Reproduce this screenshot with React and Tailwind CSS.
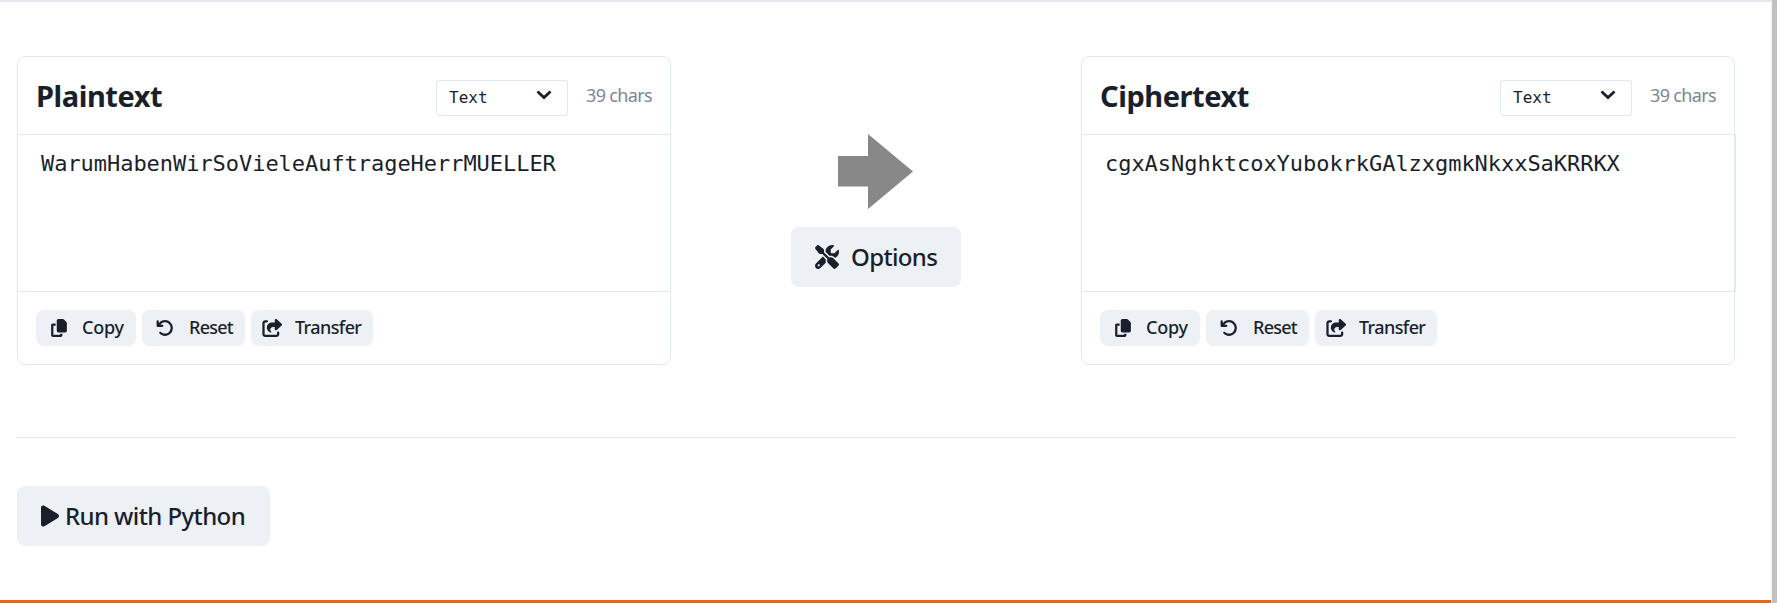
import { FaCopy, FaArrowRotateLeft, FaShareFromSquare, FaScrewdriverWrench, FaPlay } from "react-icons/fa6";

function Panel({ title, text, overflow }) {
  return (
    <section className="flex h-[309px] w-[654px] flex-col rounded-lg border border-[#e2e8f0]">
      <header className="flex h-[77px] shrink-0 items-center px-[18px]">
        <h2 className="text-[29px] leading-10 font-bold tracking-[-0.45px] whitespace-nowrap">{title}</h2>
        <div className="mt-1 ml-auto flex h-9 w-[132px] items-center justify-between rounded-[3px] border border-[#e2e8f0] pr-[15px] pl-3 font-['DejaVu_Sans_Mono',monospace] text-[16px]">
          <span>Text</span>
          <svg viewBox="0 0 16 10" className="mb-[6px] h-[10px] w-4" fill="none" stroke="currentColor" strokeWidth="2.8">
            <path d="M1.5 1.5 8 7.6l6.5-6.1" />
          </svg>
        </div>
        <span className="ml-[18px] w-[66px] text-[18px] tracking-[-0.65px] whitespace-nowrap text-[#7c869a]">39 chars</span>
      </header>
      <div className={"h-[158px] shrink-0 border-y border-[#e2e8f0] pt-[12px] pl-[23px] font-['DejaVu_Sans_Mono',monospace] text-[22px] leading-[34px] tracking-[-0.045px] " + (overflow ? "w-[654px] border-r-2" : "")}>{text}</div>
      <footer className="flex gap-[6px] pt-[18px] pl-[18px] text-[18px] leading-[34px] font-medium">
        <button className="flex h-9 w-[100px] items-center rounded-lg bg-[#edf1f6] pl-[14px]">
          <FaCopy size={18} /><span className="mb-[2px] ml-[14px] tracking-[-0.25px]">Copy</span>
        </button>
        <button className="flex h-9 w-[103px] items-center rounded-lg bg-[#edf1f6] pl-[14px]">
          <FaArrowRotateLeft size={18} /><span className="mb-[2px] ml-[15px] tracking-[-0.75px]">Reset</span>
        </button>
        <button className="flex h-9 w-[122px] items-center rounded-lg bg-[#edf1f6] pl-[11px]">
          <FaShareFromSquare className="h-[18px] w-[21px]" preserveAspectRatio="xMidYMid meet" /><span className="mb-[2px] ml-3 tracking-[-0.6px]">Transfer</span>
        </button>
      </footer>
    </section>
  );
}

export default function App() {
  return (
    <div className="flex h-[603px] w-[1777px] overflow-hidden bg-white font-['Noto_Sans',sans-serif] text-[#1a1f2c]">
      <main className="flex w-[1771px] flex-col border-t-2 border-b-[3px] border-t-[#e2e8f0] border-b-[#ee6311] pt-[54px] pl-[17px]">
        <div className="flex">
          <Panel title="Plaintext" text="WarumHabenWirSoVieleAuftrageHerrMUELLER" />
          <div className="flex w-[410px] flex-col pt-[78px]">
            <svg viewBox="0 0 75 75" className="ml-[167px] h-[75px] w-[75px]" fill="#888">
              <path d="M0 22h30V0l45 37.5L30 75V52.5H0z" />
            </svg>
            <button className="mt-[18px] ml-[120px] flex h-[60px] w-[170px] items-center rounded-lg bg-[#edf1f6] pl-6 text-[24px] font-medium">
              <FaScrewdriverWrench size={24} /><span className="ml-3 tracking-[-0.65px]">Options</span>
            </button>
          </div>
          <Panel title="Ciphertext" text="cgxAsNghktcoxYubokrkGAlzxgmkNkxxSaKRRKX" overflow />
        </div>
        <hr className="mt-[72px] w-[1718px] border-[#e2e8f0]" />
        <button className="mt-12 flex h-[60px] w-[253px] items-center rounded-lg bg-[#edf1f6] pl-[21px] text-[24px] font-medium">
          <FaPlay size={24} /><span className="ml-[3px] tracking-[-0.6px] whitespace-nowrap">Run with Python</span>
        </button>
      </main>
      <div className="w-[6px] border-l border-[#f1f1f1] bg-[#c1c1c1]" />
    </div>
  );
}
